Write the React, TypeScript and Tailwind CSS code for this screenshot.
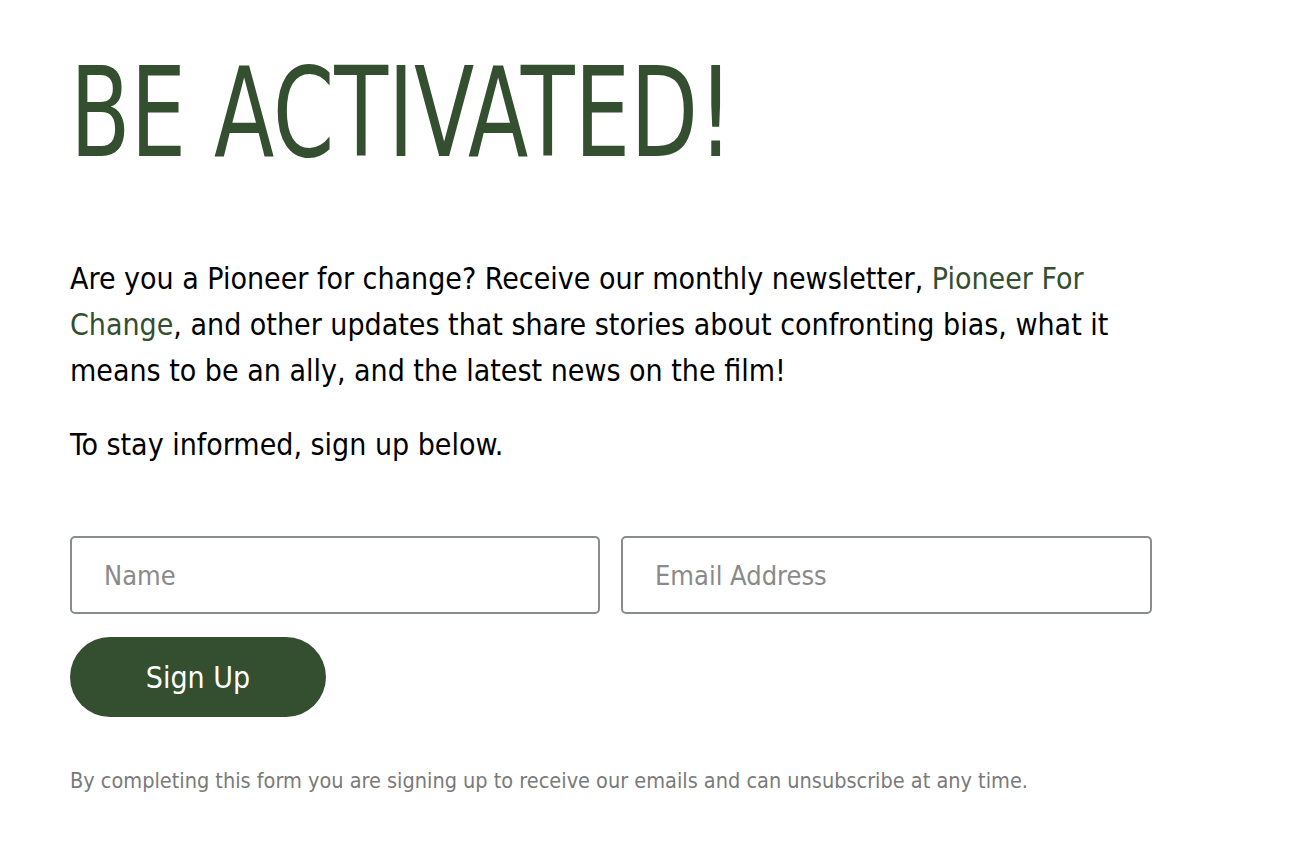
import { useState } from "react";

const bodyFont = {
  fontFamily: '"Liberation Sans Narrow", "DejaVu Sans Condensed", "DejaVu Sans", sans-serif',
  fontStretch: "condensed",
};

export default function App() {
  const [name, setName] = useState("");
  const [email, setEmail] = useState("");

  return (
    <div
      className="min-h-screen bg-white px-[70px] pt-[51px] text-black"
      style={bodyFont}
    >
      <div className="w-[1082px]">
        <h1 className="origin-left scale-x-[0.79] text-[124px] leading-none text-[#344e30] whitespace-nowrap">
          BE ACTIVATED!
        </h1>

        <p className="mt-[81px] text-[30px] leading-[46px]">
          Are you a Pioneer for change? Receive our monthly newsletter,{" "}
          <a href="#" className="text-[#344e30]">
            Pioneer For
          </a>{" "}
          <a href="#" className="text-[#344e30]">
            Change
          </a>
          , and other updates that share stories about confronting bias, what it
          means to be an ally, and the latest news on the film!
        </p>
        <p className="mt-[28px] text-[30px] leading-[46px]">
          To stay informed, sign up below.
        </p>

        <form
          className="mt-[68px]"
          onSubmit={(event) => event.preventDefault()}
        >
          <div className="flex gap-[21px]">
            <input
              type="text"
              value={name}
              onChange={(event) => setName(event.target.value)}
              placeholder="Name"
              className="h-[78px] w-[530px] rounded-[5px] border-2 border-[#888c8f] bg-white px-[32px] text-[27px] text-black placeholder:text-[#8a8a8a] focus:outline-none"
              style={bodyFont}
            />
            <input
              type="email"
              value={email}
              onChange={(event) => setEmail(event.target.value)}
              placeholder="Email Address"
              className="h-[78px] w-[531px] rounded-[5px] border-2 border-[#888c8f] bg-white px-[32px] text-[27px] text-black placeholder:text-[#8a8a8a] focus:outline-none"
              style={bodyFont}
            />
          </div>
          <button
            type="submit"
            className="mt-[23px] h-[80px] w-[256px] rounded-full bg-[#344e30] text-[30px] text-white"
            style={bodyFont}
          >
            Sign Up
          </button>
        </form>

        <p className="mt-[46px] text-[21.5px] leading-[36px] text-[#7a7a7a]">
          By completing this form you are signing up to receive our emails and
          can unsubscribe at any time.
        </p>
      </div>
    </div>
  );
}
